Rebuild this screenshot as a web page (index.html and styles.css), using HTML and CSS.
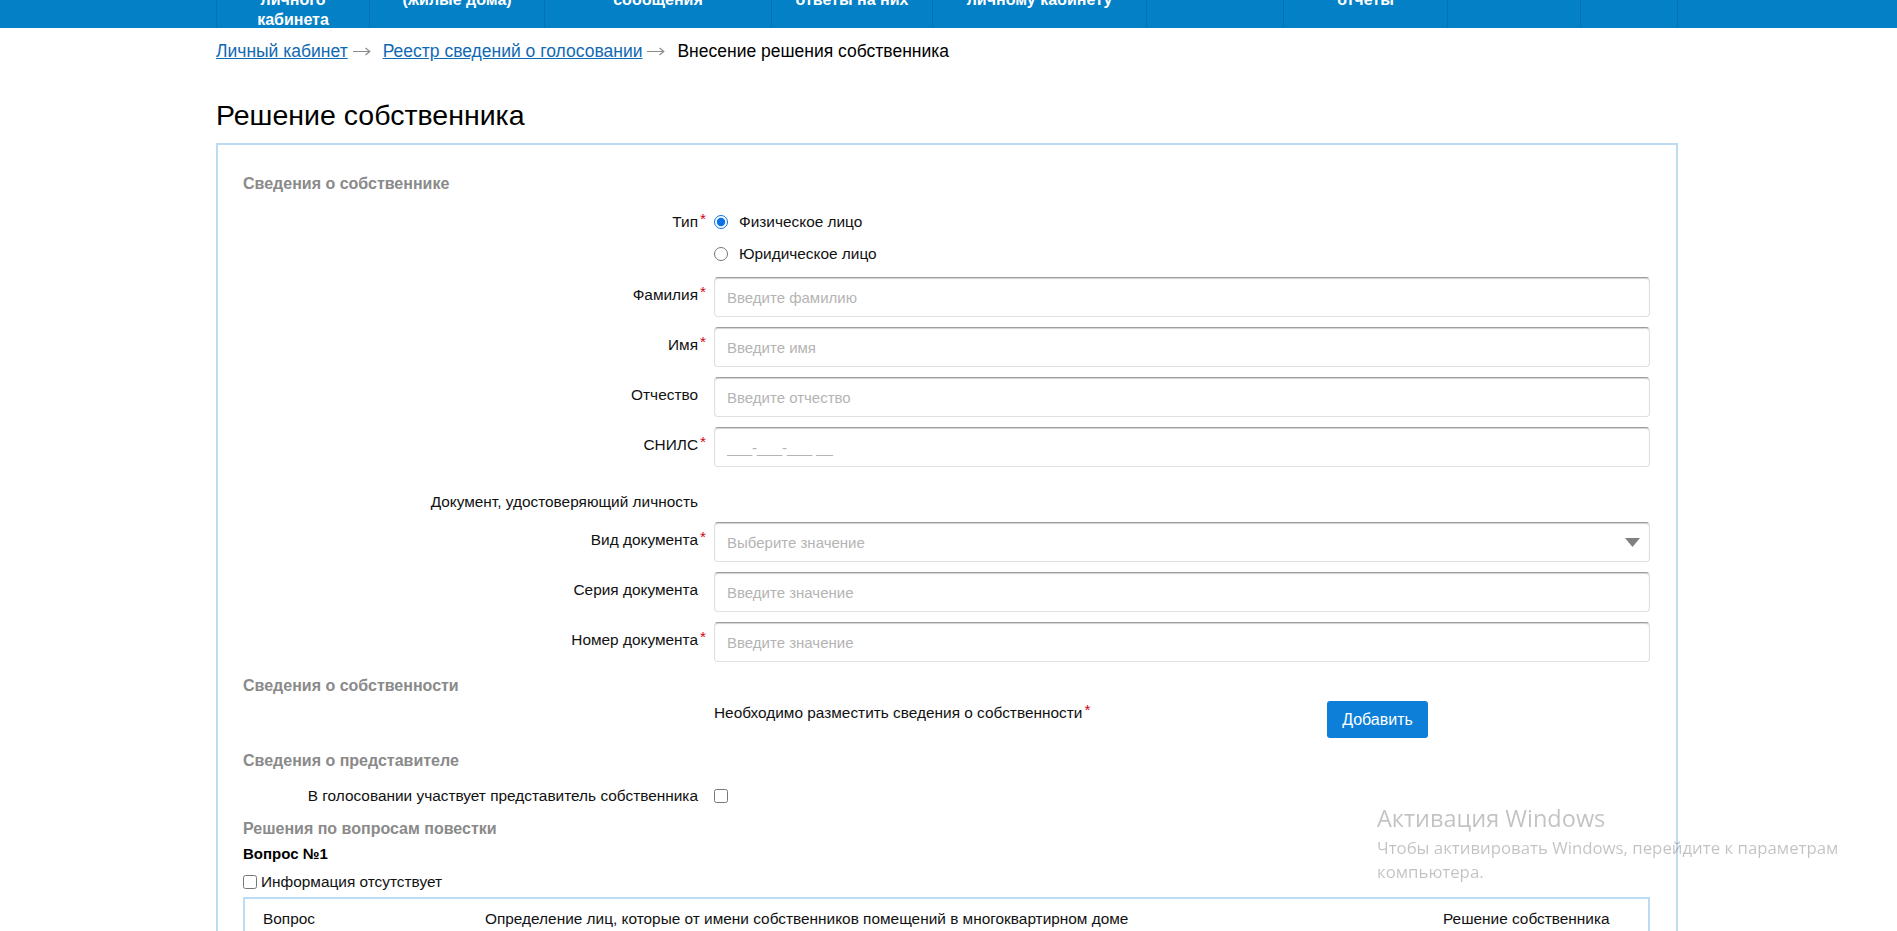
FILE: index.html
```html
<!DOCTYPE html>
<html lang="ru">
<head>
<meta charset="utf-8">
<title>Решение собственника</title>
<link rel="stylesheet" href="styles.css">
</head>
<body>
<header class="topnav">
  <nav class="nav">
    <div class="nav-item deep">Главная страница<br>личного<br>кабинета</div>
    <div class="nav-item">Объекты управления<br>(жилые дома)</div>
    <div class="nav-item">Уведомления и<br>сообщения</div>
    <div class="nav-item">Обращения и<br>ответы на них</div>
    <div class="nav-item">Инструкции по<br>личному кабинету</div>
    <div class="nav-item high">Реестры</div>
    <div class="nav-item">Аналитические<br>отчеты</div>
    <div class="nav-item high">Новости</div>
    <div class="nav-item high">Помощь</div>
  </nav>
</header>

<main class="page">
  <div class="crumbs">
    <a href="#">Личный кабинет</a><span class="sep"><svg width="18" height="9" viewBox="0 0 18 9"><path d="M0 4.5H16.5M12.5 1L16.8 4.5L12.5 8" fill="none" stroke="#8c8c8c" stroke-width="1.2"/></svg></span><a href="#">Реестр сведений о голосовании</a><span class="sep"><svg width="18" height="9" viewBox="0 0 18 9"><path d="M0 4.5H16.5M12.5 1L16.8 4.5L12.5 8" fill="none" stroke="#8c8c8c" stroke-width="1.2"/></svg></span><span class="current">Внесение решения собственника</span>
  </div>

  <h1 class="title">Решение собственника</h1>

  <section class="card">
    <h2 class="sec">Сведения о собственнике</h2>

    <div class="form">
      <div class="lbl lbl-tall">Тип<span class="req">*</span></div>
      <div class="radios">
        <label class="radio"><input type="radio" name="type" checked><span>Физическое лицо</span></label>
        <label class="radio"><input type="radio" name="type"><span>Юридическое лицо</span></label>
      </div>

      <div class="lbl">Фамилия<span class="req">*</span></div>
      <input class="field" type="text" placeholder="Введите фамилию">

      <div class="lbl">Имя<span class="req">*</span></div>
      <input class="field" type="text" placeholder="Введите имя">

      <div class="lbl">Отчество<span class="req"></span></div>
      <input class="field" type="text" placeholder="Введите отчество">

      <div class="lbl">СНИЛС<span class="req">*</span></div>
      <input class="field" type="text" placeholder="___-___-___ __">

      <div class="lbl lbl-group">Документ, удостоверяющий личность<span class="req"></span></div>
      <div class="empty lbl-group"></div>

      <div class="lbl">Вид документа<span class="req">*</span></div>
      <div class="field select">
        <span class="ph">Выберите значение</span>
        <svg class="caret" width="15" height="9" viewBox="0 0 15 9"><polygon points="0,0 15,0 7.5,9" fill="#808080"/></svg>
      </div>

      <div class="lbl">Серия документа<span class="req"></span></div>
      <input class="field" type="text" placeholder="Введите значение">

      <div class="lbl">Номер документа<span class="req">*</span></div>
      <input class="field" type="text" placeholder="Введите значение">
    </div>

    <h2 class="sec sec-prop">Сведения о собственности</h2>
    <div class="form form-prop">
      <div class="empty"></div>
      <div class="prop">
        <div class="prop-text">Необходимо разместить сведения о собственности<span class="req">*</span></div>
        <button class="btn" type="button">Добавить</button>
      </div>
    </div>

    <h2 class="sec sec-rep">Сведения о представителе</h2>
    <div class="form form-rep">
      <div class="lbl">В голосовании участвует представитель собственника<span class="req"></span></div>
      <div class="chk-cell"><input class="chk" type="checkbox"></div>
    </div>

    <h2 class="sec sec-agenda">Решения по вопросам повестки</h2>
    <h3 class="q-title">Вопрос №1</h3>
    <label class="info"><input class="chk" type="checkbox"><span>Информация отсутствует</span></label>

    <div class="qtable">
      <div class="qcell">Вопрос</div>
      <div class="qcell">Определение лиц, которые от имени собственников помещений в многоквартирном доме уполномочены на заключение договоров на использование общего имущества</div>
      <div class="qcell">Решение собственника</div>
    </div>
  </section>
</main>

<div class="watermark">
  <div class="wm-title">Активация Windows</div>
  <div class="wm-text">Чтобы активировать Windows, перейдите к параметрам<br>компьютера.</div>
</div>
</body>
</html>
```

FILE: styles.css
```css
html, body {
  margin: 0;
  padding: 0;
}

body {
  font-family: "Liberation Sans", Arial, sans-serif;
  font-size: 15.4px;
  color: #111;
  background: #fff;
}

/* top navigation (page scrolled: only bottom edge visible) */
.topnav {
  background: #0480c7;
  height: 28px;
  overflow: hidden;
  display: flex;
  align-items: flex-end;
}

.nav {
  display: flex;
  width: 1462px;
  margin-left: 216px;
  height: 30px;
  margin-bottom: -2px;
  flex-shrink: 0;
}

.nav-item {
  box-sizing: border-box;
  border-left: 1px solid #0371b4;
  display: flex;
  flex-direction: column;
  justify-content: flex-end;
  text-align: center;
  color: #fff;
  font-weight: bold;
  font-size: 16px;
  line-height: 20px;
  padding-bottom: 20px;
  white-space: nowrap;
}

.nav-item.deep { padding-bottom: 0; }
.nav-item.high { padding-bottom: 34px; }
.nav-item:last-child { border-right: 1px solid #0371b4; }

.nav-item:nth-child(1) { width: 153px; }
.nav-item:nth-child(2) { width: 175px; }
.nav-item:nth-child(3) { width: 227px; }
.nav-item:nth-child(4) { width: 161px; }
.nav-item:nth-child(5) { width: 214px; }
.nav-item:nth-child(6) { width: 137px; }
.nav-item:nth-child(7) { width: 164px; }
.nav-item:nth-child(8) { width: 133px; }
.nav-item:nth-child(9) { width: 98px; }

/* page */
.page {
  width: 1462px;
  margin-left: 216px;
}

.crumbs {
  margin-top: 13px;
  font-size: 17.5px;
  line-height: 20px;
  color: #000;
}

.crumbs a {
  color: #1069b3;
  text-decoration: underline;
}

.crumbs .sep {
  display: inline-block;
  margin: 0 12px 0 5px;
  vertical-align: 1px;
}

.crumbs .sep svg { display: block; }

.title {
  margin: 37px 0 0;
  font-size: 28.5px;
  line-height: 34px;
  font-weight: normal;
  color: #000;
}

.card {
  margin-top: 11px;
  border: 2px solid #bcdcf4;
  border-bottom: none;
  padding: 29px 26px 80px 25px;
  box-sizing: border-box;
  width: 1462px;
}

.sec {
  margin: 0;
  font-size: 16px;
  line-height: 20px;
  font-weight: bold;
  color: #8a8a8a;
}

.form {
  display: grid;
  grid-template-columns: 463px 936px;
  column-gap: 8px;
  row-gap: 10px;
  margin-top: 13px;
}

.lbl {
  text-align: right;
  line-height: 36px;
  color: #111;
  white-space: nowrap;
}

.lbl-tall { line-height: 30px; }

.lbl-group {
  line-height: 20px;
  margin-top: 15px;
}

.req {
  display: inline-block;
  width: 8px;
  text-align: right;
  color: #d0021b;
  vertical-align: 3px;
  line-height: 1;
}

.radios {
  display: flex;
  flex-direction: column;
}

.radio {
  display: flex;
  align-items: center;
  height: 30px;
  box-sizing: border-box;
  color: #111;
}

.radio:last-child { padding-top: 4px; }

.radio input {
  margin: 0 11px 0 0;
  width: 14px;
  height: 14px;
  accent-color: #0a74e6;
}

.field {
  box-sizing: border-box;
  height: 40px;
  width: 100%;
  margin: 0;
  border: 1px solid #e0e0e0;
  border-top-color: #9d9d9d;
  border-radius: 4px;
  box-shadow: inset 0 1px 1px rgba(0, 0, 0, 0.18);
  padding: 0 12px;
  font-family: "Liberation Sans", Arial, sans-serif;
  font-size: 15px;
  color: #111;
  background: #fff;
}

.field::placeholder {
  color: #b4b4b4;
}

.select {
  display: flex;
  align-items: center;
  justify-content: space-between;
  padding-right: 9px;
}

.select .ph {
  color: #b4b4b4;
  font-size: 15px;
}

.caret { display: block; }

.sec-prop { margin-top: 14px; }

.form-prop { margin-top: 5px; }

.prop {
  display: flex;
  align-items: flex-start;
}

.prop-text {
  width: 613px;
  padding-top: 1px;
  line-height: 20px;
  color: #111;
}

.btn {
  width: 101px;
  height: 37px;
  border: none;
  border-radius: 3px;
  background: #0d7fd9;
  color: #fff;
  font-family: "Liberation Sans", Arial, sans-serif;
  font-size: 16px;
  padding: 0;
}

.sec-rep { margin-top: 13px; }

.form-rep { margin-top: 15px; }

.form-rep .lbl { line-height: 20px; }

.chk-cell {
  display: flex;
  align-items: center;
  height: 20px;
}

.chk {
  margin: 0;
  width: 14px;
  height: 14px;
}

.sec-agenda { margin-top: 13px; }

.q-title {
  margin: 5px 0 0;
  font-size: 15px;
  line-height: 20px;
  font-weight: bold;
  color: #000;
}

.info {
  margin-top: 8px;
  display: flex;
  align-items: center;
  height: 20px;
  color: #111;
}

.info .chk { margin-right: 4px; }

.qtable {
  margin-top: 5px;
  border: 2px solid #bcdcf4;
  display: grid;
  grid-template-columns: 222px 958px 1fr;
  padding-top: 10px;
  padding-bottom: 20px;
}

.qcell {
  line-height: 20px;
  color: #111;
  padding-left: 18px;
}

.qcell:nth-child(2) { padding-right: 270px; }

/* Windows activation watermark overlay */
.watermark {
  position: fixed;
  left: 1377px;
  top: 800px;
  color: rgba(0, 0, 0, 0.24);
  font-family: "Open Sans", "Noto Sans", sans-serif;
  pointer-events: none;
}

.wm-title {
  font-size: 23.5px;
  line-height: 36px;
}

.wm-text {
  font-size: 16.8px;
  line-height: 24px;
}
```
